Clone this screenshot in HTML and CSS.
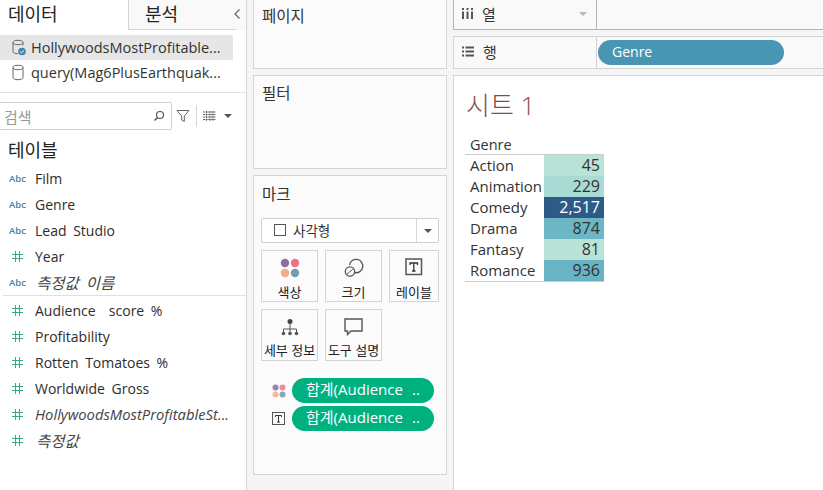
FILE: index.html
```html
<!DOCTYPE html>
<html lang="ko">
<head>
<meta charset="utf-8">
<title>시트 1</title>
<link rel="stylesheet" href="styles.css">
</head>
<body>
<svg class="defs" width="0" height="0"><defs><symbol id="hash" viewBox="0 0 11 11"><path d="M3.500 0v11M7.500 0v11M0 3.500h11M0 7.500h11" stroke="#3fa883" stroke-width="1" fill="none"/></symbol></defs></svg>
<div class="app">
  <aside class="data-pane">
    <div class="tabs">
      <div class="tab tab-active">데이터</div>
      <div class="tab tab-other">분석</div>
      <svg class="chevron" width="8" height="12" viewBox="0 0 8 12"><path d="M6.500 1.500 2 6l4.500 4.500" fill="none" stroke="#666" stroke-width="1.200"/></svg>
    </div>
    <div class="sources">
      <div class="source source-on">
        <svg class="db" width="16" height="18" viewBox="0 0 16 18"><ellipse cx="7" cy="3.500" rx="5" ry="2.200" fill="none" stroke="#666"/><path d="M2 3.500v9c0 1.300 2.200 2.200 5 2.200M12 3.500v3" fill="none" stroke="#666"/><circle cx="11" cy="12.500" r="3.800" fill="#3f86ac"/><path d="M9.200 12.500l1.400 1.400 2.300-2.600" fill="none" stroke="#fff"/></svg>
        <span class="source-name">HollywoodsMostProfitable...</span>
      </div>
      <div class="source">
        <svg class="db" width="16" height="18" viewBox="0 0 16 18"><ellipse cx="7" cy="3.500" rx="5" ry="2.200" fill="none" stroke="#666"/><path d="M2 3.500v10c0 1.300 2.200 2.200 5 2.200s5-.9 5-2.200v-10" fill="none" stroke="#666"/></svg>
        <span class="source-name">query(Mag6PlusEarthquak...</span>
      </div>
    </div>
    <div class="searchbar">
      <div class="search">
        <span class="search-text">검색</span>
        <svg width="12" height="12" viewBox="0 0 12 12"><circle cx="7" cy="5" r="3.500" fill="none" stroke="#555" stroke-width="1.200"/><path d="M4.500 7.500 1.500 10.500" stroke="#555" stroke-width="1.400"/></svg>
      </div>
      <svg class="funnel" width="14" height="14" viewBox="0 0 14 14"><path d="M1 1.500h12L8.300 7v5.500L5.700 11V7z" fill="none" stroke="#666"/></svg>
      <span class="sep"></span>
      <svg class="gridicon" width="13" height="10" viewBox="0 0 13 10"><path d="M0 1h13M0 3.500h13M0 6h13M0 8.500h13M3.500 0v10M7 0v10M10 0v10" stroke="#666" stroke-width="1" stroke-dasharray="2 .6"/></svg>
      <span class="caret"></span>
    </div>
    <div class="section-title">테이블</div>
    <ul class="fields dims">
      <li class="field"><span class="abc">Abc</span><span>Film</span></li>
      <li class="field"><span class="abc">Abc</span><span>Genre</span></li>
      <li class="field"><span class="abc">Abc</span><span>Lead Studio</span></li>
      <li class="field"><span class="num"><svg width="11" height="11"><use href="#hash"/></svg></span><span>Year</span></li>
      <li class="field"><span class="abc">Abc</span><em class="ko">측정값 이름</em></li>
    </ul>
    <ul class="fields">
      <li class="field"><span class="num"><svg width="11" height="11"><use href="#hash"/></svg></span><span>Audience&nbsp; score %</span></li>
      <li class="field"><span class="num"><svg width="11" height="11"><use href="#hash"/></svg></span><span>Profitability</span></li>
      <li class="field"><span class="num"><svg width="11" height="11"><use href="#hash"/></svg></span><span>Rotten Tomatoes %</span></li>
      <li class="field"><span class="num"><svg width="11" height="11"><use href="#hash"/></svg></span><span>Worldwide Gross</span></li>
      <li class="field"><span class="num"><svg width="11" height="11"><use href="#hash"/></svg></span><em class="long">HollywoodsMostProfitableSt...</em></li>
      <li class="field"><span class="num"><svg width="11" height="11"><use href="#hash"/></svg></span><em class="ko">측정값</em></li>
    </ul>
  </aside>

  <section class="cards">
    <div class="card card-pages"><div class="card-title">페이지</div></div>
    <div class="card card-filters"><div class="card-title">필터</div></div>
    <div class="card card-marks">
      <div class="card-title">마크</div>
      <div class="marktype">
        <div class="marktype-main"><span class="square"></span><span>사각형</span></div>
        <div class="marktype-drop"><span class="caret"></span></div>
      </div>
      <div class="markgrid">
        <div class="markbtn">
          <svg width="20" height="20" viewBox="0 0 20 20"><circle cx="5" cy="5" r="4.200" fill="#8b6f9e"/><circle cx="15" cy="5" r="4.200" fill="#f2708a"/><circle cx="5" cy="15" r="4.200" fill="#f4a987"/><circle cx="15" cy="15" r="4.200" fill="#6f9fad"/></svg>
          <span>색상</span>
        </div>
        <div class="markbtn">
          <svg width="20" height="20" viewBox="0 0 20 20"><path d="M5.500 7A6.700 6.700 0 1 1 10.700 14.600" fill="none" stroke="#555" stroke-width="1.300"/><circle cx="6" cy="13.500" r="4.700" fill="none" stroke="#555" stroke-width="1.300"/><path d="M3 16l6-5" stroke="#555"/></svg>
          <span>크기</span>
        </div>
        <div class="markbtn">
          <svg width="18" height="18" viewBox="0 0 18 18"><rect x="1" y="1" width="15.500" height="15.500" fill="none" stroke="#555" stroke-width="1.500"/><path d="M5 7V5h7.500v2M8.800 5v8M7 13h3.500" fill="none" stroke="#333" stroke-width="1.300"/></svg>
          <span>레이블</span>
        </div>
        <div class="markbtn">
          <svg width="18" height="20" viewBox="0 0 18 20"><circle cx="9" cy="3.500" r="2.500" fill="#444"/><path d="M9 6v5M2.500 14v-3h13v3M9 11v3" fill="none" stroke="#555"/><circle cx="2.500" cy="15.500" r="1.800" fill="#555"/><circle cx="9" cy="15.500" r="1.800" fill="#555"/><circle cx="15.500" cy="15.500" r="1.800" fill="#555"/></svg>
          <span>세부 정보</span>
        </div>
        <div class="markbtn">
          <svg width="19" height="18" viewBox="0 0 19 18"><path d="M1 1h17v12H7l-3.500 3.500V13H1z" fill="none" stroke="#555" stroke-width="1.400"/></svg>
          <span>도구 설명</span>
        </div>
      </div>
      <div class="pills">
        <div class="pillrow">
          <svg width="14" height="14" viewBox="0 0 14 14"><circle cx="3.500" cy="3.500" r="3" fill="#9d84ad"/><circle cx="10.500" cy="3.500" r="3" fill="#f28a9e"/><circle cx="3.500" cy="10.500" r="3" fill="#f5b899"/><circle cx="10.500" cy="10.500" r="3" fill="#86a9b5"/></svg>
          <div class="pill pill-green"><span>합계(Audience</span><span>..</span></div>
        </div>
        <div class="pillrow">
          <svg width="14" height="14" viewBox="0 0 14 14"><rect x=".5" y=".5" width="12" height="12" fill="none" stroke="#555"/><path d="M3.500 5V3.500h6V5M6.500 3.500V10M5 10h3" fill="none" stroke="#333"/></svg>
          <div class="pill pill-green"><span>합계(Audience</span><span>..</span></div>
        </div>
      </div>
    </div>
  </section>

  <main class="view">
    <div class="shelf shelf-cols">
      <div class="shelf-label">
        <svg width="11" height="11" viewBox="0 0 11 11"><path d="M1 0v2M5.500 0v2M10 0v2" stroke="#555" stroke-width="2"/><path d="M1 3.500V11M5.500 3.500V11M10 3.500V11" stroke="#555" stroke-width="2"/></svg>
        <span class="shelf-name">열</span>
        <span class="caret caret-light"></span>
      </div>
      <div class="shelf-body"></div>
    </div>
    <div class="shelf shelf-rows">
      <div class="shelf-label">
        <svg width="12" height="11" viewBox="0 0 12 11"><path d="M0 1.500h2M0 5.500h2M0 9.500h2" stroke="#555" stroke-width="2"/><path d="M3.500 1.500H12M3.500 5.500H12M3.500 9.500H12" stroke="#555" stroke-width="2"/></svg>
        <span class="shelf-name">행</span>
      </div>
      <div class="shelf-body"><div class="pill pill-blue">Genre</div></div>
    </div>
    <div class="sheet">
      <h1 class="sheet-title">시트 1</h1>
      <table class="crosstab">
        <thead><tr><th>Genre</th><th></th></tr></thead>
        <tbody>
          <tr><td>Action</td><td class="val v45">45</td></tr>
          <tr><td>Animation</td><td class="val v229">229</td></tr>
          <tr><td>Comedy</td><td class="val v2517">2,517</td></tr>
          <tr><td>Drama</td><td class="val v874">874</td></tr>
          <tr><td>Fantasy</td><td class="val v81">81</td></tr>
          <tr><td>Romance</td><td class="val v936">936</td></tr>
        </tbody>
      </table>
    </div>
  </main>
</div>
</body>
</html>
```
FILE: styles.css
```css
* { box-sizing: border-box; }
html, body { margin: 0; padding: 0; }
body {
  width: 823px;
  height: 490px;
  overflow: hidden;
  background: #f5f5f5;
  font-family: "Open Sans", "Noto Sans CJK KR", sans-serif;
  font-size: 14px;
  color: #333;
}
.defs { display: block; height: 0; }
.app { display: flex; width: 823px; height: 490px; }

/* data pane */
.data-pane {
  width: 247px;
  flex: none;
  background: #fff;
  border-right: 1px solid #d4d4d4;
  display: flex;
  flex-direction: column;
}
.tabs { display: flex; align-items: center; height: 30px; flex: none; background: #f9f9f9; }
.tab { height: 30px; font-size: 18px; line-height: 28px; color: #222; }
.tab-active { width: 128px; padding-left: 8px; background: #fff; }
.tab-other { width: 108px; padding-left: 16px; border-left: 1px solid #d4d4d4; border-bottom: 1px solid #d4d4d4; }
.chevron { margin-left: -3px; margin-top: -3px; }
.sources { margin-top: 5px; height: 58px; border-bottom: 1px solid #e0e0e0; }
.source { display: flex; align-items: center; height: 25px; width: 233px; padding-left: 11px; gap: 4px; }
.source-on { background: #e6e6e6; }
.source-name { color: #333; font-size: 14.500px; white-space: nowrap; }
.db { flex: none; }
.searchbar { display: flex; align-items: center; margin-top: 9px; height: 28px; }
.search {
  width: 173px;
  height: 28px;
  margin-left: -1px;
  border: 1px solid #cfcfcf;
  border-radius: 2px;
  display: flex;
  align-items: center;
  justify-content: space-between;
  padding: 0 6px 0 4px;
}
.search-text { color: #999; font-size: 15px; }
.funnel { margin-left: 4px; }
.sep { width: 1px; height: 22px; background: #d4d4d4; margin: 0 6px 0 6px; }
.caret { width: 0; height: 0; border-left: 4px solid transparent; border-right: 4px solid transparent; border-top: 4px solid #555; }
.searchbar .caret { margin-left: 8px; }
.section-title { margin: 8px 0 0 8px; font-size: 18px; line-height: 24px; height: 27px; color: #222; }
.fields { list-style: none; margin: 0; padding: 0; }
.dims { border-bottom: 1px solid #e0e0e0; margin-left: 3px; }
.dims .field { margin-left: -3px; }
.field { display: flex; align-items: center; height: 26px; color: #2d2d2d; font-size: 14px; word-spacing: 3px; white-space: nowrap; }
.field em { font-style: italic; font-weight: 400; color: #444; }
.field .ko { font-size: 15.500px; margin-left: 1px; }
.field .long { font-size: 14.800px; word-spacing: 0; }
.abc { width: 35px; padding-left: 9px; font-size: 9.500px; color: #4a7f98; font-weight: 600; flex: none; }
.num { width: 35px; padding-left: 12px; display: flex; align-items: center; flex: none; }
.fields:last-child { margin-top: 1px; }

/* cards */
.cards { width: 206px; flex: none; padding: 0 6px 15px; display: flex; flex-direction: column; gap: 6px; }
.card { background: #fbfbfb; border: 1px solid #d4d4d4; }
.card-title { padding: 5px 8px 0; font-size: 15.500px; line-height: 22px; color: #333; }
.card-pages { height: 69px; border-top: 0; }
.card-filters { height: 94px; }
.card-filters .card-title { padding-top: 6px; }
.card-marks { flex: 1; padding: 0 7px; }
.card-marks .card-title { padding: 7px 1px 0; height: 42px; }
.marktype { display: flex; width: 178px; height: 25px; border: 1px solid #d0d0d0; border-radius: 2px; background: #fff; }
.marktype-main { flex: 1; display: flex; align-items: center; gap: 7px; padding: 0 0 1px 12px; font-size: 13.500px; }
.square { width: 12px; height: 12px; border: 1px solid #555; }
.marktype-drop { width: 22px; border-left: 1px solid #d8d8d8; display: flex; align-items: center; justify-content: center; }
.markgrid { display: grid; grid-template-columns: 57px 57px 50px; column-gap: 7px; row-gap: 7px; margin-top: 7px; }
.markbtn {
  height: 52px;
  border: 1px solid #d4d4d4;
  display: flex;
  flex-direction: column;
  align-items: center;
  justify-content: space-between;
  padding: 7px 0 1px;
  font-size: 13px;
  line-height: 15px;
  color: #222;
  white-space: nowrap;
}
.markgrid .markbtn:nth-child(n+4) { padding: 8px 0 2px; }
.pills { margin-top: 17px; display: flex; flex-direction: column; gap: 3px; }
.pillrow { display: flex; align-items: center; gap: 6px; padding-left: 11px; }
.pill { height: 25px; border-radius: 13px; color: #fff; font-size: 14px; line-height: 24px; white-space: nowrap; }
.pill-green { width: 142px; background: #00b180; display: flex; justify-content: space-between; padding: 0 14px; font-size: 15px; line-height: 22px; }
.pill-blue { width: 186px; background: #4996b2; padding-left: 14px; }

/* view */
.view { flex: 1; display: flex; flex-direction: column; min-width: 0; }
.shelf { display: flex; flex: none; background: #f9f9f9; }
.shelf-label { width: 144px; display: flex; align-items: center; padding-left: 8px; border-right: 1px solid #d4d4d4; border-left: 1px solid #b4b4b4; flex: none; }
.shelf-name { margin-left: 9px; font-size: 15px; color: #333; flex: 1; }
.shelf-body { flex: 1; display: flex; align-items: center; padding-left: 1px; }
.shelf-cols { height: 30px; border-bottom: 1px solid #b4b4b4; }
.shelf-cols .shelf-label { border-right-color: #b4b4b4; padding-bottom: 2px; }
.caret-light { border-top-color: #b8b8b8; margin-right: 9px; }
.shelf-rows { height: 33px; margin-top: 6px; border-top: 1px solid #d4d4d4; border-bottom: 1px solid #d4d4d4; }
.shelf-rows .shelf-label { border-left-color: #d4d4d4; padding-bottom: 3px; }
.sheet { flex: 1; margin-top: 6px; background: #fff; border-top: 1px solid #d4d4d4; border-left: 1px solid #d4d4d4; padding-left: 11px; }
.sheet-title { margin: 12px 0 0 1px; font-size: 26px; font-weight: 300; line-height: 34px; color: #864b45; }
.crosstab { border-collapse: collapse; margin-top: 12px; font-size: 15px; color: #333; }
.crosstab th { height: 20px; padding: 2px 0 0 5px; font-weight: 400; font-size: 14.500px; line-height: 18px; text-align: left; border-bottom: 1px solid #ccc; }
.crosstab td { height: 21px; padding: 0 0 0 5px; line-height: 21px; }
.crosstab td:first-child { width: 79px; }
.crosstab tbody tr:last-child { border-bottom: 1px solid #ccc; }
.crosstab .val { width: 60px; padding: 0 4px 0 0; font-size: 16px; text-align: right; }
.v45 { background: #bae3d8; }
.v229 { background: #a9dad4; }
.v2517 { background: #2e5a87; color: #fff; }
.v874 { background: #6cb6c6; }
.v81 { background: #bae3d8; }
.v936 { background: #68b3c4; }
```
